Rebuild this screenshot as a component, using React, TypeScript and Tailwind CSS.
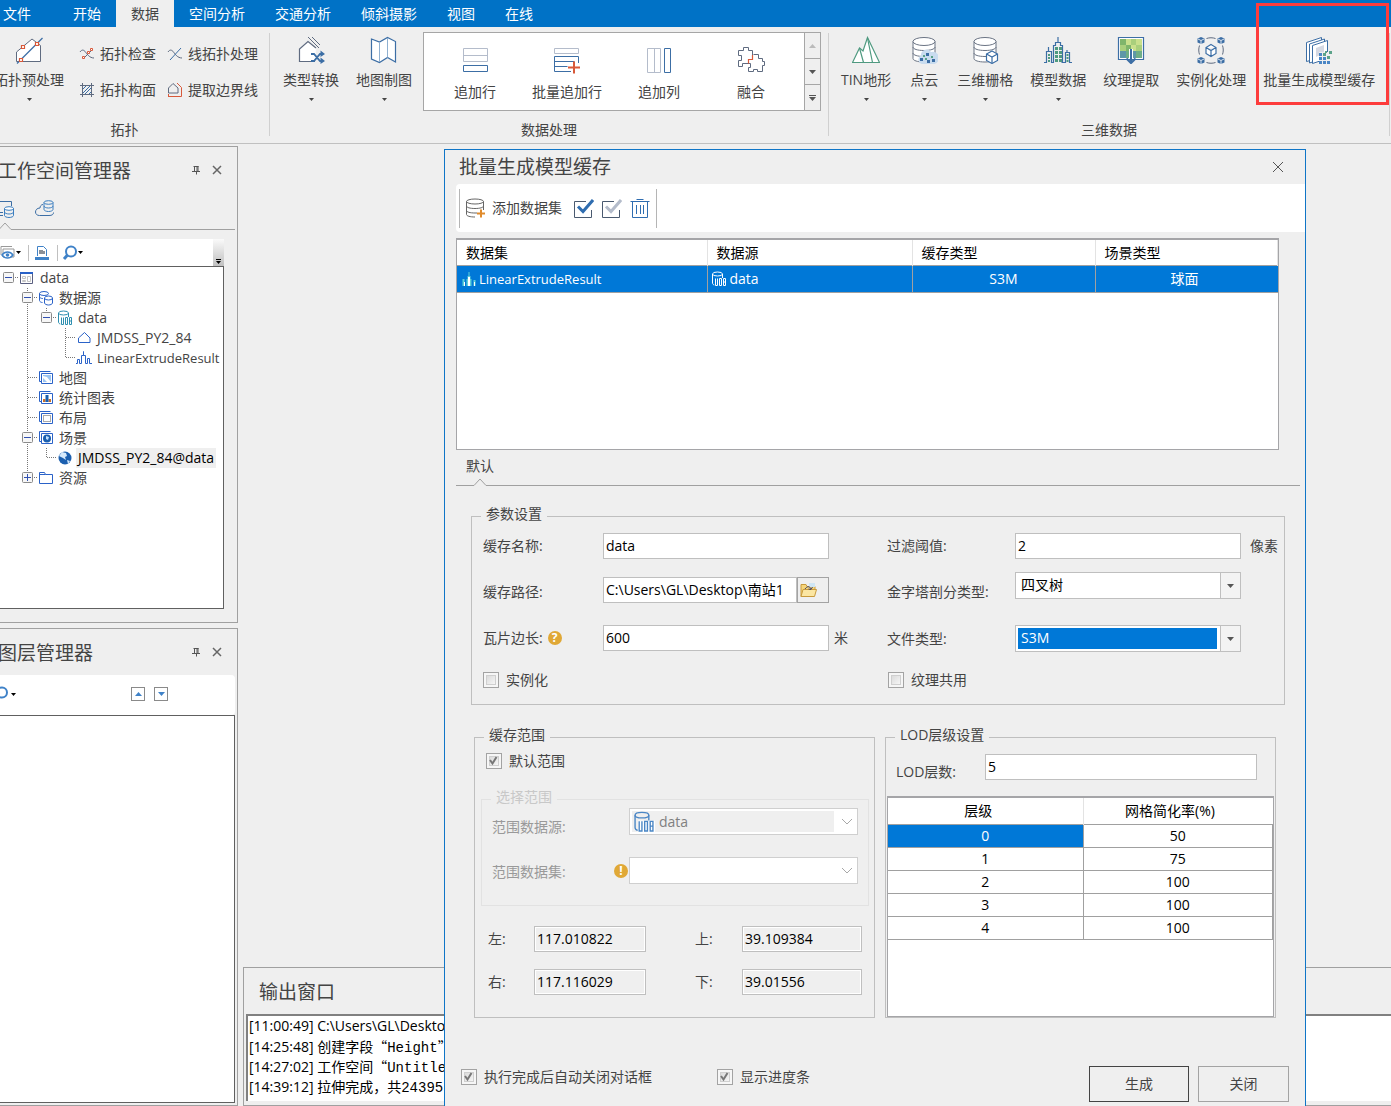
import React, { useState } from 'react';

const TABS = ['文件', '开始', '数据', '空间分析', '交通分析', '倾斜摄影', '视图', '在线'];

const LOD_ROWS = [
  { level: 0, rate: 50 },
  { level: 1, rate: 75 },
  { level: 2, rate: 100 },
  { level: 3, rate: 100 },
  { level: 4, rate: 100 },
];

// guides: one character per indent column, "|" passes through, "t" branches, "l" ends
const TREE = [
  { label: 'data', guides: ' ', box: '-', icon: 'workspace' },
  { label: '数据源', guides: ' t', box: '-', icon: 'sources' },
  { label: 'data', guides: ' |l', box: '-', icon: 'udb' },
  { label: 'JMDSS_PY2_84', guides: ' | t', box: '', icon: 'region' },
  { label: 'LinearExtrudeResult', guides: ' | l', box: '', icon: 'model', compact: true },
  { label: '地图', guides: ' t', box: '', icon: 'map' },
  { label: '统计图表', guides: ' t', box: '', icon: 'chart' },
  { label: '布局', guides: ' t', box: '', icon: 'layout' },
  { label: '场景', guides: ' t', box: '-', icon: 'scene' },
  { label: 'JMDSS_PY2_84@data', guides: ' |l', box: '', icon: 'globe', selected: true },
  { label: '资源', guides: ' l', box: '+', icon: 'folder' },
];

const Svg: React.FC<{ size: number; className?: string; children: React.ReactNode }> = ({ size, className = '', children }) => (
  <svg width={size} height={size} viewBox={`0 0 ${size} ${size}`} fill="none" aria-hidden="true" className={`shrink-0 ${className}`}>
    {children}
  </svg>
);

/* ---------- ribbon icons ---------- */

const TopoPrepIcon = () => (
  <Svg size={28}>
    <path d="M1.500 25.500V16L17 3l8.500 6.500v16z" fill="#fff" stroke="#5f6b80" />
    <path d="M2 27.500L27.500 2" stroke="#3c6ea5" strokeWidth="1.2" />
    <path d="M6.500 9.500h3v3h-3zM20.500 6.500h3v3h-3zM4.500 22.500h3v3h-3z" fill="#fff" stroke="#d8593a" strokeWidth="1.2" />
  </Svg>
);

const TopoCheckIcon = () => (
  <Svg size={16}>
    <path d="M1 6c2-3 4-2 5.500 0s4 6 8.500 6M4 13L14 3" stroke="#5f6b80" />
    <path d="M11.500 2.500h2v2h-2zM8.500 5.500h2v2h-2zM3.500 10.500h2v2h-2z" fill="#fff" stroke="#d8593a" />
  </Svg>
);

const TopoFaceIcon = () => (
  <Svg size={16}>
    <path d="M4 7l3-3M4 11l7-7M5 13l7-7M9 13l3-3" stroke="#3c6ea5" />
    <path d="M3.500 1v14M12.500 1v14M1 3.500h14M1 12.500h14" stroke="#5f6b80" />
  </Svg>
);

const TopoLineIcon = () => (
  <Svg size={16}>
    <path d="M1 6c2-3 4-2 5.500 0s4 6 8.500 6" stroke="#5f6b80" />
    <path d="M3 14L14 2" stroke="#3c6ea5" />
  </Svg>
);

const BorderLineIcon = () => (
  <Svg size={16}>
    <path d="M1.500 11V6L6 1.500l5 4.500v5z" stroke="#5f6b80" />
    <path d="M1 14.500h13.500V5.500L10 1" stroke="#d8593a" />
    <path d="M1.500 12v3" stroke="#d8593a" />
  </Svg>
);

const ConvertIcon = () => (
  <Svg size={28}>
    <path d="M18 25.500H2.500V13L11 5.500l8 6.500" fill="#fff" stroke="#5f6b80" strokeWidth="1.2" />
    <path d="M11 1l11 11M15 1l8 8" stroke="#5f6b80" />
    <path d="M14 18h3l6 7h3M14 25h3l6-7h3" stroke="#3c6ea5" strokeWidth="1.8" />
    <path d="M23.500 14.500l4.500 3.500-4.500 3zM23.500 21.500l4.500 3.500-4.500 3z" fill="#3c6ea5" />
  </Svg>
);

const MapIcon = () => (
  <Svg size={28}>
    <path d="M1.500 3l8 3 8-4.500 8 4V26l-8-4.500-8 5-8-3.500z" fill="#fff" stroke="#3c6ea5" strokeWidth="1.2" />
    <path d="M9.500 6v20M17.500 2v19.500" stroke="#8fb0d0" />
  </Svg>
);

const AppendRowIcon = () => (
  <Svg size={28}>
    <path d="M2.500 2.500h24v13h-24zM2.500 9.500h24" fill="#fff" stroke="#b4bccb" />
    <path d="M2.500 19.500h24v6h-24z" stroke="#3c6ea5" />
  </Svg>
);

const BatchRowIcon = () => (
  <Svg size={28}>
    <path d="M1.500 2.500h24v5h-24z" stroke="#b4bccb" />
    <path d="M18 25.500H1.500v-15h24V17M1.500 15.500h20M1.500 20.500h13" stroke="#3c6ea5" />
    <path d="M15 21.500h12M21 15.500v12" stroke="#d8593a" strokeWidth="2" />
  </Svg>
);

const AppendColIcon = () => (
  <Svg size={28}>
    <path d="M2.500 2.500h13v24h-13zM9.500 2.500v24" stroke="#b4bccb" />
    <path d="M19.500 2.500h6v24h-6z" stroke="#3c6ea5" />
  </Svg>
);

const MergeIcon = () => (
  <Svg size={28}>
    <path d="M15.500 9.500v-5h-4v-3h-5v3h-5v5h3v5h-3v6h4v-3h8v4h-2v4h5v-2h4v2h5v-6h2v-4h-2v-3h-4v-4h-5" fill="#fff" stroke="#5f6b80" />
    <path d="M15.500 9v4.500h-4v4" stroke="#d8593a" strokeWidth="1.2" />
  </Svg>
);

const TinIcon = () => (
  <Svg size={28}>
    <path d="M.5 26.500L7.500 12l3.500 3 4.500-13.500 12 25z" fill="#fff" stroke="#4f9a80" strokeWidth="1.2" />
    <path d="M7.500 12l4 14.500M15.500 2l5 24.500" stroke="#4f9a80" strokeWidth="1.2" />
  </Svg>
);

const Cylinder = () => (
  <>
    <path d="M3 5.500v17c0 2 4.500 3.500 11 3.500s11-1.500 11-3.500v-17" fill="#fff" stroke="#6b7484" />
    <ellipse cx="14" cy="5.500" rx="11" ry="4" fill="#fff" stroke="#6b7484" />
    <path d="M3 11c0 2 4.500 3.500 11 3.500S25 13 25 11M3 17c0 2 4.500 3.500 11 3.500S25 19 25 17" stroke="#6b7484" />
  </>
);

const PointCloudIcon = () => (
  <Svg size={28}>
    <Cylinder />
    <path d="M12 28a4.500 4.500 0 0 1-1-8.500 5.500 5.500 0 0 1 10-3.500 5.500 5.500 0 0 1 3.500 12z" fill="#c9dcef" />
    <path d="M10 22h3v3h-3zM16 17h3v3h-3zM17 24h3v3h-3zM22 23h3v3h-3z" fill="#3c6ea5" />
    <path d="M13 19h2v2h-2zM15 22h2v2h-2zM21 20h2v2h-2z" fill="#5ba38a" />
  </Svg>
);

const RasterIcon = () => (
  <Svg size={28}>
    <Cylinder />
    <path d="M21 15l5.500 3v6.500L21 27.500l-5.500-3V18z" fill="#fff" stroke="#3c6ea5" strokeWidth="1.2" />
    <path d="M15.500 18l5.500 3 5.500-3M21 21v6" stroke="#3c6ea5" strokeWidth="1.2" />
  </Svg>
);

const ModelIcon = () => (
  <Svg size={28}>
    <path d="M0 26.500h2.500V15.500h2V11v4.500h3v11H10M9.500 26.500v-17h2v-3h2.500V1v5.500h2.500v3h2v17M17.500 26.500h4v-10H23V14v2.500h2.500v10H28" stroke="#3c6ea5" strokeWidth="1.2" />
    <path d="M11 11h3v3h-3zM15 11h3v3h-3zM11 15h3v3h-3zM15 15h3v3h-3zM11 19h3v3h-3zM15 19h3v3h-3zM11 23h3v3h-3zM15 23h3v3h-3zM4 18h2v2H4zM4 21h2v2H4zM4 24h2v2H4zM22.500 18h2v2h-2zM22.500 21h2v2h-2zM22.500 24h2v2h-2z" fill="#4f9a80" />
  </Svg>
);

const TextureIcon = () => (
  <Svg size={28}>
    <path d="M1.500 1.500h25v22h-25z" fill="#fff" stroke="#3c6ea5" strokeWidth="1.2" />
    <path d="M3 3h6v6H3zM9 9h5v6H9z" fill="#7fb56b" />
    <path d="M9 3h5v6H9zM14 9h5v6h-5zM19 3h6v6h-6z" fill="#c9e08c" />
    <path d="M14 3h5v6h-5zM3 9h6v6H3zM19 9h6v6h-6z" fill="#a9cf7c" />
    <path d="M3 15h6v7H3zM14 15h5v7h-5z" fill="#5f98a8" />
    <path d="M9 15h5v7H9zM19 15h6v7h-6z" fill="#6fae86" />
    <path d="M12 13h4v10h-4z" fill="#fff" />
    <path d="M14 13v13" stroke="#3c6ea5" strokeWidth="2" />
    <path d="M9.500 22.500L14 27l4.500-4.500" stroke="#3c6ea5" strokeWidth="2.2" />
  </Svg>
);

const InstanceIcon = () => (
  <Svg size={28}>
    <path d="M14 8.500l5 3v6l-5 3-5-3v-6zM9 11.500l5 3 5-3M14 14.500v6" fill="#fff" stroke="#3c6ea5" strokeWidth="1.2" />
    <path d="M9.500 2.500c3-1 6-1 9 0M9.500 26.500c3 1 6 1 9 0M2.500 9.500c-1 3-1 6 0 9M25.500 9.500c1 3 1 6 0 9" stroke="#5f6b80" />
    {[[4, 4], [24, 4], [4, 24], [24, 24]].map(([x, y]) => (
      <g key={`${x}-${y}`} transform={`translate(${x} ${y})`}>
        <path d="M-3.500-1.500L0-3l3.500 1.500v4L0 4l-3.500-1.500z" fill="#3c6ea5" />
        <path d="M-3-1L0 .5 3-1M0 .5V4" stroke="#fff" strokeWidth=".8" />
      </g>
    ))}
  </Svg>
);

const CacheIcon = () => (
  <Svg size={28}>
    <path d="M1.500 6.500l15-5v20l-15 4z" fill="#fff" stroke="#3c6ea5" />
    <path d="M4.500 8l15-5v19l-15 5z" fill="#fff" stroke="#3c6ea5" />
    <path d="M7.500 9.500l15-5v18l-15 5z" fill="#fff" stroke="#3c6ea5" />
    <path d="M11 12l8-3v8l-8 4z" fill="#d5d9e3" />
    <path d="M14 16h14v12H14z" fill="#efefef" />
    <path d="M14 17h3v3h-3zM14 21h3v3h-3zM18 21h3v3h-3zM14 25h3v3h-3zM18 25h3v3h-3zM22 25h3v3h-3z" fill="#4a86c5" />
    <path d="M18 17h3v3h-3zM20 15h2v2h-2zM22 20h3v3h-3zM24 15h3v3h-3z" fill="#5ba38a" />
  </Svg>
);

/* ---------- small icons ---------- */

const PinIcon = () => (
  <Svg size={10}>
    <path d="M2.500 1.500h5M3.500 1v5M6 1v5M7 1v5M1 6.500h8M5.500 6v3.500" stroke="#555" />
  </Svg>
);

const CloseIcon = () => (
  <Svg size={10}>
    <path d="M1 1l8 8M9 1L1 9" stroke="#666" strokeWidth="1.5" />
  </Svg>
);

const Caret: React.FC<{ className?: string }> = ({ className = 'fill-[#444]' }) => (
  <svg width="7" height="4" viewBox="0 0 7 4" aria-hidden="true" className={className}>
    <path d="M0 0h7L3.500 4z" />
  </svg>
);

const TinyCaret: React.FC<{ className?: string }> = ({ className = 'fill-black' }) => (
  <svg width="5" height="3" viewBox="0 0 5 3" aria-hidden="true" className={className}>
    <path d="M0 0h5L2.500 3z" />
  </svg>
);

const Chevron = () => (
  <svg width="12" height="8" viewBox="0 0 12 8" fill="none" aria-hidden="true">
    <path d="M1 1l5 5 5-5" stroke="#a8a8a8" />
  </svg>
);

const MagnifierIcon = () => (
  <Svg size={16}>
    <circle cx="9" cy="6.500" r="5" stroke="#3f82c8" strokeWidth="2" />
    <path d="M5.500 10L2 14" stroke="#3f82c8" strokeWidth="3" />
  </Svg>
);

const UdbIcon: React.FC<{ color: string; size?: number; bg?: string }> = ({ color, size = 16, bg = '#fff' }) => (
  <svg width={size} height={size} viewBox="0 0 16 16" fill="none" aria-hidden="true" className="shrink-0">
    <path d="M1.500 3v9c0 1 1 2 2 2" stroke={color} />
    <ellipse cx="6.500" cy="3" rx="5" ry="2" stroke={color} />
    <path d="M11.500 3v4" stroke={color} />
    <path d="M3.500 7h12.500v9H3.500z" fill={bg} />
    <path d="M4.500 7.500v7h2v-7M8.500 7.500h2v7h-2zM12.500 7.500h2v7h-2zM12.500 11h2" stroke={color} />
  </svg>
);

const DialogDbIcon = () => (
  <Svg size={20}>
    <path d="M1.500 3.500v13c0 1.500 3.500 2.500 8.500 2.500M18.500 3.500V12" stroke="#666" />
    <ellipse cx="10" cy="3.500" rx="8.500" ry="2.500" stroke="#666" />
    <path d="M1.500 8c0 1.500 3.500 2.500 8.500 2.500s8.500-1 8.500-2.500M1.500 12.500c0 1.500 3.500 2.500 8.500 2.500h2" stroke="#666" />
    <path d="M12 15.500h8M16 11.500v8" stroke="#e08b2c" strokeWidth="2" />
  </Svg>
);

const CheckBoxIcon: React.FC<{ color: string }> = ({ color }) => (
  <Svg size={20}>
    <path d="M12 3.500H.5v16h17V12" stroke="#4a5a70" />
    <path d="M4 8.500l5 5L19 2" stroke={color} strokeWidth="3" />
  </Svg>
);

const TrashIcon = () => (
  <Svg size={20}>
    <path d="M6.500 1.500h7M.5 3.500h19M2.500 3.500v16h15v-16M6.500 7v9M10.500 7v9M13.500 7v9" stroke="#2f6db0" />
  </Svg>
);

const TreeIcon: React.FC<{ name: string }> = ({ name }) => {
  if (name === 'udb') return <UdbIcon color="#2d8fb0" />;
  return (
    <Svg size={16}>
      {name === 'workspace' && (
        <>
          <path d="M1.500 2.500h12v11h-12z" stroke="#5a5f80" />
          <path d="M1 2h13v2H1z" fill="#2a62c8" />
          <path d="M3.500 6.500h3v2h-3zM3.500 10.500h3v1h-3zM8.500 6.500h3v5h-3z" stroke="#c5c5c5" />
        </>
      )}
      {name === 'sources' && (
        <>
          <ellipse cx="6" cy="3.500" rx="4.500" ry="2" stroke="#2a62c8" />
          <path d="M1.500 3.500v7c0 1 1.500 2 3 2M2 7.500c1 1 2 1 3 1" stroke="#2a62c8" />
          <ellipse cx="10.500" cy="8" rx="4" ry="2" fill="#fff" stroke="#2a62c8" />
          <path d="M6.500 8v5c0 1 2 2 4 2s4-1 4-2V8" stroke="#2a62c8" />
        </>
      )}
      {name === 'region' && <path d="M2.500 12.500V8L8.500 2.500 14 8v4.500z" stroke="#2a62c8" />}
      {name === 'model' && <path d="M0 13.500h1.500v-4h2v4h2V5.500h2V1.500v4h2v8h2V8.500h2v5H16" stroke="#2a62c8" />}
      {['map', 'chart', 'layout', 'scene'].includes(name) && (
        <>
          <path d="M1.500 11.500V1.500h11" stroke="#2a62c8" />
          <path d="M1.500 11.500h2M3.500 3.500h11v10h-11z" fill="#fff" stroke="#2a62c8" />
        </>
      )}
      {name === 'map' && <path d="M5 5h8v7l-4-5-4-1zM5 8l4 4H5z" fill="#9cc4f0" />}
      {name === 'chart' && (
        <>
          <path d="M5 12V9h2.500v3zM10.500 12V9H13v3z" fill="#c8702c" />
          <path d="M7.500 12V5h3v7z" fill="#1b5faf" />
        </>
      )}
      {name === 'layout' && <path d="M5.500 5.500h7v6h-7z" stroke="#555" strokeDasharray="1 1" />}
      {name === 'scene' && (
        <>
          <circle cx="9" cy="8.500" r="4" fill="#1b5faf" />
          <path d="M8 6l3 1-1 3-2-1z" fill="#bfe0ff" />
        </>
      )}
      {name === 'globe' && (
        <>
          <circle cx="8" cy="8" r="6.500" fill="#1b5faf" />
          <path d="M2 6l3-4 4 1 1 3-2 1 1 3-3-2zM10 10l3 1-2 3z" fill="#d5e9fb" />
        </>
      )}
      {name === 'folder' && <path d="M1.500 13.500v-11h5l1 2h7v9zM1.500 4.500h6" stroke="#2a62c8" />}
    </Svg>
  );
};

/* ---------- building blocks ---------- */

const RibbonButton: React.FC<{ icon: React.ReactNode; label: string; menu?: boolean; marked?: boolean }> = ({ icon, label, menu, marked }) => (
  <button type="button" className="relative flex h-[67px] min-w-8 shrink-0 flex-col items-center whitespace-nowrap pt-px">
    {icon}
    <span className="mt-1.5 leading-5">{label}</span>
    {menu && <TinyCaret className="mt-2 fill-[#444]" />}
    {marked && <span className="pointer-events-none absolute -top-8 -right-3.5 -bottom-[3px] -left-[7px] z-10 border-3 border-[#fd3c3c]" />}
  </button>
);

const SmallButton: React.FC<{ icon: React.ReactNode; label: string }> = ({ icon, label }) => (
  <button type="button" className="flex h-5 items-center gap-[5px] whitespace-nowrap leading-5">
    {icon}
    {label}
  </button>
);

const RibbonGroup: React.FC<{ title: string; className?: string; children: React.ReactNode }> = ({ title, className = '', children }) => (
  <section className={`flex shrink-0 flex-col ${className}`}>
    <div className="flex h-[84px]">{children}</div>
    <h2 className="mt-[3px] text-center leading-5">{title}</h2>
  </section>
);

const PanelTitle: React.FC<{ title: string }> = ({ title }) => (
  <header className="flex h-12 items-center justify-between pr-[13px]">
    <h2 className="-ml-0.5 text-[19px] leading-6">{title}</h2>
    <div className="flex items-center gap-[11px] pb-0.5">
      <button type="button" aria-label="固定"><PinIcon /></button>
      <button type="button" aria-label="关闭面板"><CloseIcon /></button>
    </div>
  </header>
);

// thin rule with a small upward notch under the active tab
const NotchLine: React.FC<{ lead: string }> = ({ lead }) => (
  <div className="flex h-2 items-end">
    <span className={`border-b border-[#a0a0a0] ${lead}`} />
    <svg width="14" height="8" viewBox="0 0 14 8" fill="none" aria-hidden="true" className="shrink-0">
      <path d="M0 7.500h1L7 1l6 6.500h1" stroke="#a0a0a0" />
    </svg>
    <span className="flex-1 border-b border-[#a0a0a0]" />
  </div>
);

const CheckField: React.FC<{ label: string; initial?: boolean }> = ({ label, initial = false }) => {
  const [on, setOn] = useState(initial);
  return (
    <label className="flex h-5 items-center gap-[7px] whitespace-nowrap">
      <span className="grid">
        <input
          type="checkbox"
          checked={on}
          onChange={() => setOn(!on)}
          className="col-start-1 row-start-1 size-4 appearance-none border border-[#a3a3a3] bg-linear-to-br from-[#d2d2d2] to-white shadow-[inset_0_0_0_2px_#f6f6f6,inset_0_0_0_3px_#cfcfcf]"
        />
        {on && (
          <svg width="16" height="16" viewBox="0 0 16 16" fill="none" aria-hidden="true" className="pointer-events-none col-start-1 row-start-1">
            <path d="M4 7l2.500 3.500L10.500 4" stroke="#777" strokeWidth="2" />
          </svg>
        )}
      </span>
      {label}
    </label>
  );
};

const TextField: React.FC<{ id: string; value: string; className: string }> = ({ id, value, className }) => (
  <input id={id} type="text" defaultValue={value} className={`h-[26px] min-w-0 border border-[#bfbfbf] bg-white px-0.5 pb-0.5 text-black ${className}`} />
);

const RangeField: React.FC<{ id: string; label: string; value: string; className: string }> = ({ id, label, value, className }) => (
  <>
    <label htmlFor={id}>{label}</label>
    <input id={id} type="text" readOnly defaultValue={value} className={`h-[26px] min-w-0 border border-[#bfbfbf] bg-[#efefef] px-0.5 pb-0.5 text-black shadow-[inset_0_0_0_1px_#fff] ${className}`} />
  </>
);

const DropDown: React.FC<{ id: string; options: string[]; highlight?: boolean }> = ({ id, options, highlight }) => (
  <div className="flex h-[27px] w-[226px] border border-[#bfbfbf] bg-white">
    <select
      id={id}
      className={`min-w-0 flex-1 appearance-none pb-0.5 ${highlight ? 'm-0.5 mr-[3px] bg-[#0078d7] pl-[3px] text-white' : 'pl-[5px] text-black'}`}
    >
      {options.map(o => <option key={o}>{o}</option>)}
    </select>
    <span className="pointer-events-none flex w-5 items-center justify-center border-l border-[#bfbfbf] bg-[#f3f3f3]">
      <Caret className="fill-[#555]" />
    </span>
  </div>
);

const Group: React.FC<{ title: string; className?: string; faded?: boolean; children: React.ReactNode }> = ({ title, className = '', faded, children }) => (
  <fieldset className={`min-w-0 border ${faded ? 'border-[#e2e2e2]' : 'border-[#bfbfbf]'} ${className}`}>
    <legend className={`ml-[9px] px-[5px] pb-1 leading-5 ${faded ? 'text-[#c8c8c8]' : ''}`}>{title}</legend>
    {children}
  </fieldset>
);

/* ---------- page parts ---------- */

const Ribbon: React.FC = () => (
  <>
    <nav className="flex h-[27px] bg-[#0072c6] text-white">
      {TABS.map((tab, i) => (
        <button
          key={tab}
          type="button"
          className={`shrink-0 leading-[27px] ${i === 0 ? 'w-[58px] pl-[3px] text-left' : 'px-[15px]'} ${tab === '数据' ? 'bg-[#efefef] text-[#444]' : ''}`}
        >
          {tab}
        </button>
      ))}
    </nav>
    <div className="-ml-5 flex h-[117px] border-b border-[#c0c0c0] pt-[6px]">
      <RibbonGroup title="拓扑" className="w-[289px]">
        <div className="flex pt-0.5 pl-3.5">
          <RibbonButton icon={<TopoPrepIcon />} label="拓扑预处理" menu />
          <div className="ml-[15px] grid auto-cols-max grid-flow-col grid-rows-[20px_20px] content-start gap-x-[11px] gap-y-4 pt-[9px]">
            <SmallButton icon={<TopoCheckIcon />} label="拓扑检查" />
            <SmallButton icon={<TopoFaceIcon />} label="拓扑构面" />
            <SmallButton icon={<TopoLineIcon />} label="线拓扑处理" />
            <SmallButton icon={<BorderLineIcon />} label="提取边界线" />
          </div>
        </div>
      </RibbonGroup>
      <span className="h-[103px] w-px shrink-0 bg-[#d0d0d0]" />
      <RibbonGroup title="数据处理" className="w-[558px]">
        <div className="flex gap-[17px] pt-0.5 pl-[13px]">
          <RibbonButton icon={<ConvertIcon />} label="类型转换" menu />
          <RibbonButton icon={<MapIcon />} label="地图制图" menu />
        </div>
        <div className="-mt-px ml-[11px] flex h-[79px] w-[398px] border border-[#a6a6a6] bg-white">
          <div className="flex flex-1 pl-[5px]">
            {[
              { label: '追加行', icon: <AppendRowIcon /> },
              { label: '批量追加行', icon: <BatchRowIcon /> },
              { label: '追加列', icon: <AppendColIcon /> },
              { label: '融合', icon: <MergeIcon /> },
            ].map(item => (
              <button key={item.label} type="button" className="flex w-[92px] flex-col items-center pt-[13px]">
                {item.icon}
                <span className="mt-2 leading-5">{item.label}</span>
              </button>
            ))}
          </div>
          <div className="flex w-4 flex-col divide-y divide-[#a6a6a6] border-l border-[#a6a6a6] bg-[#efefef]">
            <button type="button" aria-label="向上" className="flex flex-1 items-center justify-center"><Caret className="rotate-180 fill-[#bbb]" /></button>
            <button type="button" aria-label="向下" className="flex flex-1 items-center justify-center"><Caret className="fill-[#555]" /></button>
            <button type="button" aria-label="更多" className="flex flex-1 flex-col items-center justify-center gap-px">
              <span className="h-px w-[7px] bg-[#555]" />
              <Caret className="fill-[#555]" />
            </button>
          </div>
        </div>
      </RibbonGroup>
      <span className="h-[103px] w-px shrink-0 bg-[#d0d0d0]" />
      <RibbonGroup title="三维数据" className="w-[560px]">
        <div className="flex gap-[17px] pt-0.5 pl-3">
          <RibbonButton icon={<TinIcon />} label="TIN地形" menu />
          <RibbonButton icon={<PointCloudIcon />} label="点云" menu />
          <RibbonButton icon={<RasterIcon />} label="三维栅格" menu />
          <RibbonButton icon={<ModelIcon />} label="模型数据" menu />
          <RibbonButton icon={<TextureIcon />} label="纹理提取" />
          <RibbonButton icon={<InstanceIcon />} label="实例化处理" />
          <RibbonButton icon={<CacheIcon />} label="批量生成模型缓存" marked />
        </div>
      </RibbonGroup>
      <span className="h-[103px] w-px shrink-0 bg-[#d0d0d0]" />
    </div>
  </>
);

const TreeGuide: React.FC<{ kind: string; box: string }> = ({ kind, box }) => (
  <svg width="19" height="20" viewBox="0 0 19 20" fill="none" aria-hidden="true" className="shrink-0">
    {kind !== ' ' && <path d={kind === 'l' ? 'M8.500 0v10' : 'M8.500 0v20'} stroke="#777" strokeDasharray="1 1" />}
    {(box || kind === 't' || kind === 'l') && <path d="M9 9.500h9" stroke="#777" strokeDasharray="1 1" />}
    {box && (
      <>
        <rect x="3.500" y="4.500" width="10" height="10" rx="1" fill="#f7f7f7" stroke="#8a8a8a" />
        <path d={box === '+' ? 'M5 9.500h7M8.500 6v7' : 'M5 9.500h7'} stroke="#3050b0" />
      </>
    )}
  </svg>
);

const WorkspacePanel: React.FC = () => (
  <section className="flex h-[477px] flex-col border border-l-0 border-[#a0a0a0] pr-0.5">
    <PanelTitle title="工作空间管理器" />
    <div className="flex h-[27px] items-center gap-5 overflow-hidden">
      <button type="button" aria-label="本地工作空间" className="-ml-1.5">
        <Svg size={20}>
          <path d="M1 2.500h16.500V7M1 16.500h8M4 13.500h5" stroke="#3c6ea5" />
          <ellipse cx="15" cy="9.500" rx="4.500" ry="1.800" fill="#fff" stroke="#3c7fc0" />
          <path d="M10.500 9.500v7c0 1 2 2 4.500 2s4.500-1 4.500-2v-7M10.500 13c0 1 2 2 4.500 2s4.500-1 4.500-2" stroke="#3c7fc0" />
        </Svg>
      </button>
      <button type="button" aria-label="在线工作空间">
        <Svg size={20}>
          <path d="M9 5.500c-2 0-3 2-3 3.500-3 0-4.500 2-4.500 4s1.500 3.500 4 3.500H15c3 0 4.500-1 4.500-3" stroke="#3c6ea5" />
          <ellipse cx="14.500" cy="3.500" rx="4.500" ry="1.800" stroke="#3c7fc0" />
          <path d="M10 3.500v7c0 1 2 2 4.500 2s4.500-1 4.500-2v-7M10 7c0 1 2 2 4.500 2S19 8 19 7" stroke="#3c7fc0" />
        </Svg>
      </button>
    </div>
    <div className="-ml-0.5"><NotchLine lead="w-0" /></div>
    <div className="mt-[9px] mr-[11px] flex h-[27px] bg-white">
      <div className="flex flex-1 items-center">
        <button type="button" aria-label="显示" className="flex items-center gap-px">
          <Svg size={15}>
            <path d="M1 10V1.500h11" stroke="#999" />
            <path d="M3 4h11v8H3z" fill="#fff" stroke="#999" />
            <path d="M2 10c3-4 8-4 11 0-3 4-8 4-11 0z" fill="#fff" stroke="#3f82c8" strokeWidth="1.4" />
            <circle cx="7.500" cy="10" r="1.800" fill="#3f82c8" />
          </Svg>
          <TinyCaret />
        </button>
        <span className="mr-1.5 ml-[7px] h-4 w-px bg-[#c0c0c0]" />
        <button type="button" aria-label="输出图片">
          <Svg size={14}>
            <path d="M2.500 10V.5h6l3 3V10" stroke="#3f82c8" />
            <path d="M4 4h4v4H4zM7 5h3v3H7z" fill="#8a8f96" />
            <path d="M0 11h14v3H0z" fill="#3f82c8" />
          </Svg>
        </button>
        <span className="mr-1 ml-2 h-4 w-px bg-[#c0c0c0]" />
        <button type="button" aria-label="查找" className="flex items-center">
          <MagnifierIcon />
          <TinyCaret />
        </button>
      </div>
      <button type="button" aria-label="工具栏选项" className="flex w-[11px] flex-col items-center justify-end gap-px bg-linear-to-b from-[#fafafa] to-[#c0c0c0] pb-0.5">
        <span className="h-px w-[5px] bg-black" />
        <TinyCaret />
      </button>
    </div>
    <ul className="mr-[11px] mb-[13px] flex-1 border border-l-0 border-[#606060] bg-white pt-px">
      {TREE.map((node, i) => (
        <li key={i} className="flex h-5 items-center">
          {node.guides.split('').map((kind, col) => (
            <TreeGuide key={col} kind={kind} box={col === node.guides.length - 1 ? node.box : ''} />
          ))}
          <TreeIcon name={node.icon} />
          <span className={`ml-[3px] px-0.5 whitespace-nowrap leading-5 ${node.compact ? 'text-[13px]' : ''} ${node.selected ? 'bg-[#efefef] text-black' : ''}`}>{node.label}</span>
        </li>
      ))}
    </ul>
  </section>
);

const LayerPanel: React.FC = () => (
  <section className="mt-[5px] flex flex-1 flex-col border border-l-0 border-[#a0a0a0] pr-0.5">
    <PanelTitle title="图层管理器" />
    <div className="-mt-0.5 flex h-10 items-center rounded-r-sm bg-white pb-0.5">
      <button type="button" aria-label="查找图层" className="-ml-[7px] flex items-center gap-0.5">
        <MagnifierIcon />
        <TinyCaret />
      </button>
      <div className="ml-[115px] flex gap-[9px]">
        <button type="button" aria-label="上移" className="flex size-3.5 items-center justify-center border border-[#8a8a8a]"><Caret className="rotate-180 fill-[#3f82c8]" /></button>
        <button type="button" aria-label="下移" className="flex size-3.5 items-center justify-center border border-[#8a8a8a]"><Caret className="fill-[#3f82c8]" /></button>
      </div>
    </div>
    <div className="mb-0.5 flex-1 border border-l-0 border-[#606060] bg-white" />
  </section>
);

const OutputLine: React.FC<{ time: string; text: string; code: string; tail?: string }> = ({ time, text, code, tail }) => (
  <p className="h-5">
    [{time}]{' '}
    <span className="font-['Noto_Sans_CJK_SC',sans-serif]">
      {text}
      <span className="font-['Liberation_Mono',monospace]">{code}</span>
      {tail}
    </span>
  </p>
);

const OutputPanel: React.FC = () => (
  <section className="ml-[5px] flex h-[139px] flex-1 flex-col self-end border border-r-0 border-[#a0a0a0] pl-0.5">
    <h2 className="pt-3 pl-[13px] text-[19px] leading-6">输出窗口</h2>
    <div className="mt-2.5 mb-1 flex-1 border-t-2 border-l-2 border-[#808080] bg-white pl-px whitespace-nowrap text-black">
      <p className="h-5">[11:00:49] C:\Users\GL\Desktop</p>
      <OutputLine time="14:25:48" text="创建字段“" code="Height" tail="”" />
      <OutputLine time="14:27:02" text="工作空间“" code="Untitled" tail="”" />
      <OutputLine time="14:39:12" text="拉伸完成，共" code="24395" />
    </div>
  </section>
);

const DatasetTable: React.FC = () => (
  <div className="mt-1.5 mr-[26px] ml-[11px] h-[212px] border border-t-2 border-[#a5a5a8] bg-white">
    <table className="w-full table-fixed border-collapse text-left">
      <colgroup>
        <col className="w-[250px]" />
        <col className="w-[205px]" />
        <col className="w-[183px]" />
        <col />
      </colgroup>
      <thead className="text-black">
        <tr className="h-[25px]">
          {['数据集', '数据源', '缓存类型', '场景类型'].map(h => (
            <th key={h} scope="col" className="border-r border-[#e3e3e3] p-0 pt-px pl-[9px] font-normal">{h}</th>
          ))}
        </tr>
      </thead>
      <tbody>
        <tr className="h-[27px] bg-[#0078d7] text-white">
          <td className="border border-l-0 border-[#a0a0a0] p-0 pl-[5px]">
            <span className="flex items-center gap-[3px] text-[13px]">
              <Svg size={14}>
                <path d="M1.500 7v7M12.500 8v6" stroke="#5fd0d8" strokeWidth="2" />
                <path d="M4.500 14V7h1V4h1V0h1v4h1v3h1v7z" fill="#5fd0d8" />
                <path d="M6 5h2v9H6zM2 10h1v4H2zM12 10h1v4h-1z" fill="#fff" />
              </Svg>
              LinearExtrudeResult
            </span>
          </td>
          <td className="border border-[#a0a0a0] p-0 pl-[3px]">
            <span className="flex items-center gap-[3px]"><UdbIcon color="#fff" bg="#0078d7" />data</span>
          </td>
          <td className="border border-[#a0a0a0] p-0 text-center">S3M</td>
          <td className="border border-r-0 border-[#a0a0a0] p-0 pr-1 text-center">球面</td>
        </tr>
      </tbody>
    </table>
  </div>
);

const ParameterGroup: React.FC = () => (
  <Group title="参数设置" className="mt-[18px] mr-5 ml-[26px] h-[201px]">
    <div className="grid grid-cols-[404px_1fr] pt-[5px] pl-[11px]">
      <div className="flex flex-col">
        <div className="flex items-center">
          <label htmlFor="cache-name" className="w-[120px]">缓存名称:</label>
          <TextField id="cache-name" value="data" className="w-[226px]" />
        </div>
        <div className="mt-[18px] flex items-center">
          <label htmlFor="cache-path" className="w-[120px] pt-1">缓存路径:</label>
          <TextField id="cache-path" value={'C:\\Users\\GL\\Desktop\\南站1'} className="w-[194px]" />
          <button type="button" aria-label="浏览" className="h-[26px] w-8 border border-[#a3a3a3] pl-0.5">
            <Svg size={18}>
              <path d="M1 15.500V3.500h5l1 2h8V9" fill="#f6d57a" stroke="#c89a3c" />
              <path d="M9 2h6v4H9z" fill="#cfe6f5" />
              <path d="M1 15.500L3 8.500h13.500l-2 7z" fill="#fbe6a2" stroke="#c89a3c" />
              <path d="M5 8c2-3 5-3 6 0M11 8.500l1.500-2.500M11 8.500L8.500 8" stroke="#446" />
            </Svg>
          </button>
        </div>
        <div className="mt-[22px] flex items-center">
          <span className="flex w-[120px] items-center gap-[5px]">
            <label htmlFor="tile-size">瓦片边长:</label>
            <span className="flex size-3.5 items-center justify-center rounded-full bg-[#e0a836] text-xs leading-none font-bold text-white">?</span>
          </span>
          <TextField id="tile-size" value="600" className="w-[226px]" />
          <span className="ml-[5px]">米</span>
        </div>
        <div className="mt-[19px]"><CheckField label="实例化" /></div>
      </div>
      <div className="flex flex-col">
        <div className="flex items-center">
          <label htmlFor="threshold" className="w-32">过滤阈值:</label>
          <TextField id="threshold" value="2" className="w-[226px]" />
          <span className="ml-[9px] whitespace-nowrap">像素</span>
        </div>
        <div className="mt-[13px] flex h-[30px] items-start">
          <label htmlFor="pyramid" className="w-32 self-end">金字塔剖分类型:</label>
          <DropDown id="pyramid" options={['四叉树', '八叉树']} />
        </div>
        <div className="mt-[23px] flex items-center">
          <label htmlFor="file-type" className="w-32">文件类型:</label>
          <DropDown id="file-type" options={['S3M', 'S3MB']} highlight />
        </div>
        <div className="mt-[18px] pl-px"><CheckField label="纹理共用" /></div>
      </div>
    </div>
  </Group>
);

const RangeGroup: React.FC = () => (
  <Group title="缓存范围" className="h-[293px] w-[401px]">
    <div className="pt-0.5 pl-[11px]"><CheckField label="默认范围" initial /></div>
    <Group title="选择范围" faded className="mt-4 mr-[5px] ml-1.5 h-[119px]">
      <div className="flex flex-col gap-5 pl-2.5 text-[#999]">
        <div className="-mt-[3px] flex items-start">
          <label htmlFor="range-source" className="w-[137px] pt-[9px]">范围数据源:</label>
          <div className="flex h-[27px] w-[229px] items-center border border-[#cfcfcf] bg-white p-0.5">
            <span className="flex h-full flex-1 items-center bg-[#efefef] pl-px">
              <UdbIcon color="#4a86c5" size={22} />
              <select id="range-source" disabled className="min-w-0 flex-1 appearance-none pl-1 text-[#808080] opacity-100">
                <option>data</option>
              </select>
            </span>
            <span className="pointer-events-none flex w-[21px] justify-end pr-0.5"><Chevron /></span>
          </div>
        </div>
        <div className="flex items-center">
          <label htmlFor="range-dataset" className="w-[122px] pt-0.5">范围数据集:</label>
          <span className="mr-px flex size-3.5 items-center justify-center rounded-full bg-[#e0a836] text-xs leading-none font-bold text-white">!</span>
          <div className="flex h-[27px] w-[229px] items-center border border-[#cfcfcf] bg-white pr-1">
            <select id="range-dataset" disabled className="min-w-0 flex-1 appearance-none opacity-100" />
            <span className="pointer-events-none"><Chevron /></span>
          </div>
        </div>
      </div>
    </Group>
    <div className="mt-5 grid grid-cols-[46px_161px_47px_120px] items-center gap-y-[17px] pl-[13px]">
      <RangeField id="range-left" label="左:" value="117.010822" className="w-28" />
      <RangeField id="range-top" label="上:" value="39.109384" className="w-[120px]" />
      <RangeField id="range-right" label="右:" value="117.116029" className="w-28" />
      <RangeField id="range-bottom" label="下:" value="39.01556" className="w-[120px]" />
    </div>
  </Group>
);

const LodGroup: React.FC = () => (
  <Group title="LOD层级设置" className="h-[293px] flex-1">
    <div className="flex items-start pt-[5px] pr-[18px] pl-2.5">
      <label htmlFor="lod-count" className="w-[89px] pt-2">LOD层数:</label>
      <TextField id="lod-count" value="5" className="flex-1" />
    </div>
    <div className="mx-px mt-3.5 h-[221px] border border-t-2 border-[#a5a5a8] bg-white">
      <table className="w-full table-fixed border-collapse text-center text-black">
        <colgroup>
          <col className="w-[195px]" />
          <col />
        </colgroup>
        <thead>
          <tr className="h-[26px]">
            <th scope="col" className="border-r border-[#e3e3e3] p-0 pr-3.5 font-normal">层级</th>
            <th scope="col" className="p-0 pr-4 font-normal">网格简化率(%)</th>
          </tr>
        </thead>
        <tbody>
          {LOD_ROWS.map(row => (
            <tr key={row.level} className="h-[23px]">
              <td className={`border border-l-0 border-[#a0a0a0] p-0 ${row.level === 0 ? 'bg-[#0078d7] text-white' : ''}`}>{row.level}</td>
              <td className="border border-[#a0a0a0] p-0">{row.rate}</td>
            </tr>
          ))}
        </tbody>
      </table>
    </div>
  </Group>
);

const CacheDialog: React.FC = () => (
  <div role="dialog" aria-labelledby="dialog-title" className="z-10 col-start-1 row-start-1 mt-[5px] mr-[85px] ml-[444px] flex flex-col border border-b-0 border-[#0f75c7] bg-[#efefef]">
    <header className="flex h-[34px] items-center justify-between pr-[21px] pl-3.5">
      <h1 id="dialog-title" className="text-[19px] leading-6">批量生成模型缓存</h1>
      <button type="button" aria-label="关闭">
        <Svg size={12}><path d="M1 1l10 10M11 1L1 11" stroke="#555" /></Svg>
      </button>
    </header>
    <div className="ml-[11px] flex h-12 items-center rounded-l-sm bg-white pl-[3px]">
      <div className="flex h-[39px] items-center border-x border-[#b5b5b5] pr-1.5 pl-[5px]">
        <button type="button" className="flex items-center gap-[7px] whitespace-nowrap">
          <DialogDbIcon />
          添加数据集
        </button>
        <div className="ml-3 flex gap-2">
          <button type="button" aria-label="全选"><CheckBoxIcon color="#2f6db0" /></button>
          <button type="button" aria-label="反选"><CheckBoxIcon color="#b4bccb" /></button>
          <button type="button" aria-label="删除"><TrashIcon /></button>
        </div>
      </div>
    </div>
    <DatasetTable />
    <div className="mt-1.5 mr-[5px] ml-[11px]">
      <button type="button" className="px-2.5 leading-5">默认</button>
      <div className="mt-0.5"><NotchLine lead="w-[17px]" /></div>
    </div>
    <ParameterGroup />
    <div className="mt-5 mr-[29px] ml-[29px] flex gap-2.5">
      <RangeGroup />
      <LodGroup />
    </div>
    <footer className="mt-12 mr-4 mb-1 ml-4 flex items-start">
      <div className="w-64 pt-px"><CheckField label="执行完成后自动关闭对话框" initial /></div>
      <div className="pt-px"><CheckField label="显示进度条" initial /></div>
      <div className="ml-auto flex gap-[9px]">
        <button type="button" className="h-9 w-[100px] border border-[#444]">生成</button>
        <button type="button" className="h-9 w-[91px] border border-[#a3a3a3]">关闭</button>
      </div>
    </footer>
  </div>
);

const App: React.FC = () => {
  return (
    <div className="flex min-h-screen flex-col overflow-hidden bg-[#efefef] font-['Open_Sans','Noto_Sans_CJK_SC',sans-serif] text-sm leading-5 text-[#444]">
      <Ribbon />
      <main className="grid flex-1">
        <div className="col-start-1 row-start-1 flex">
          <aside className="flex w-[238px] shrink-0 flex-col pt-0.5">
            <WorkspacePanel />
            <LayerPanel />
          </aside>
          <OutputPanel />
        </div>
        <CacheDialog />
      </main>
    </div>
  );
};

export default App;
